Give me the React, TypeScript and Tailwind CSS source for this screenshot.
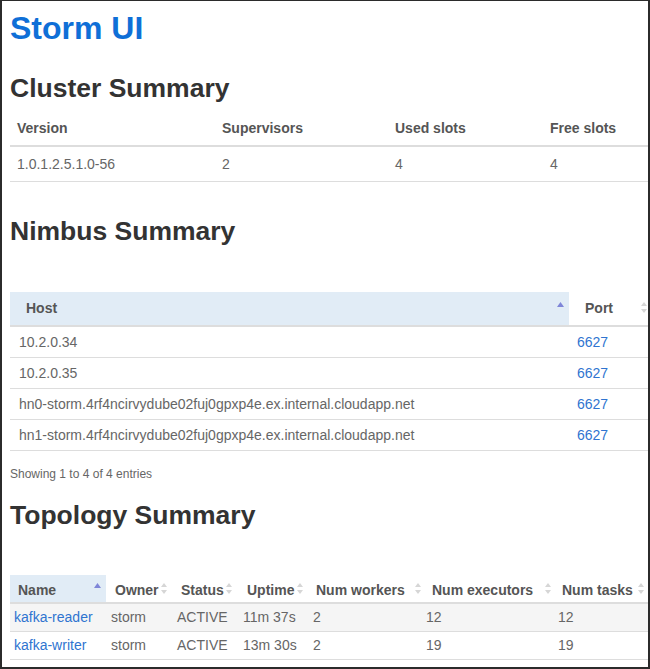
import React from "react";

const UpArrow = () => (
  <svg width="7" height="5" viewBox="0 0 7 5" className="shrink-0">
    <polygon points="0,5 3.5,0 7,5" fill="#7f86d8" />
  </svg>
);

const BothArrow = () => (
  <svg width="6" height="11" viewBox="0 0 6 11" className="shrink-0">
    <polygon points="0,4 3,0 6,4" fill="#d6d6d6" />
    <polygon points="0,7 3,11 6,7" fill="#d6d6d6" />
  </svg>
);

type Col = {
  label: string;
  w: string;
  hpl: string;
  hpr: string;
  bpl: string;
  asc?: boolean;
};

const topoCols: Col[] = [
  { label: "Name", w: "w-[96px]", hpl: "pl-[8px]", hpr: "pr-[5px]", bpl: "pl-[4px]", asc: true },
  { label: "Owner", w: "w-[66px]", hpl: "pl-[9px]", hpr: "pr-[5px]", bpl: "pl-[5px]" },
  { label: "Status", w: "w-[66px]", hpl: "pl-[9px]", hpr: "pr-[6px]", bpl: "pl-[5px]" },
  { label: "Uptime", w: "w-[70px]", hpl: "pl-[9px]", hpr: "pr-[5px]", bpl: "pl-[5px]" },
  { label: "Num workers", w: "w-[114px]", hpl: "pl-[8px]", hpr: "pr-[1px]", bpl: "pl-[5px]" },
  { label: "Num executors", w: "w-[132px]", hpl: "pl-[10px]", hpr: "pr-[3px]", bpl: "pl-[4px]" },
  { label: "Num tasks", w: "w-[100px]", hpl: "pl-[8px]", hpr: "pr-[10px]", bpl: "pl-[4px]" },
];

const topoRows = [
  ["kafka-reader", "storm", "ACTIVE", "11m 37s", "2", "12", "12"],
  ["kafka-writer", "storm", "ACTIVE", "13m 30s", "2", "19", "19"],
];

const hosts = [
  "10.2.0.34",
  "10.2.0.35",
  "hn0-storm.4rf4ncirvydube02fuj0gpxp4e.ex.internal.cloudapp.net",
  "hn1-storm.4rf4ncirvydube02fuj0gpxp4e.ex.internal.cloudapp.net",
];

export default function App() {
  return (
    <div className="w-[650px] h-[669px] bg-white border-[#2b2b2b] border-l-2 border-t border-r-2 border-b-2 overflow-hidden font-['Liberation_Sans',Arial,sans-serif]">
      <div className="pl-[8px] w-[900px]">
        <h1 className="mt-[9px] text-[32px] leading-[36px] font-bold text-[#0f6fd7]">Storm UI</h1>

        <h2 className="mt-[27px] text-[26.5px] leading-[30px] font-bold text-[#333]">Cluster Summary</h2>
        <table className="mt-[8px] table-fixed border-collapse text-[14px] leading-[20px]">
          <thead>
            <tr className="border-b-2 border-[#dddddd]">
              <th className="w-[205px] text-left font-bold text-[#555] pl-[7px] py-[7px]">Version</th>
              <th className="w-[172px] text-left font-bold text-[#555] pl-[7px] py-[7px]">Supervisors</th>
              <th className="w-[155px] text-left font-bold text-[#555] pl-[8px] py-[7px]">Used slots</th>
              <th className="w-[150px] text-left font-bold text-[#555] pl-[8px] py-[7px]">Free slots</th>
            </tr>
          </thead>
          <tbody>
            <tr className="border-b border-[#dddddd]">
              <td className="pl-[7px] py-[7px] text-[#666]">1.0.1.2.5.1.0-56</td>
              <td className="pl-[7px] py-[7px] text-[#666]">2</td>
              <td className="pl-[8px] py-[7px] text-[#666]">4</td>
              <td className="pl-[8px] py-[7px] text-[#666]">4</td>
            </tr>
          </tbody>
        </table>

        <h2 className="mt-[34px] text-[26.5px] leading-[30px] font-bold text-[#333]">Nimbus Summary</h2>
        <table className="mt-[46px] table-fixed border-collapse text-[14px] leading-[20px]">
          <thead>
            <tr className="border-b-2 border-[#dddddd]">
              <th className="w-[559px] bg-[#e1ecf6] text-left font-bold text-[#555] pl-[16px] pr-[5px] pt-[6px] pb-[7px]">
                <div className="flex justify-between items-start">
                  <span>Host</span>
                  <span className="mt-[4px]"><UpArrow /></span>
                </div>
              </th>
              <th className="w-[84px] text-left font-bold text-[#555] pl-[16px] pr-[6px] pt-[6px] pb-[7px]">
                <div className="flex justify-between items-start">
                  <span>Port</span>
                  <span className="mt-[4px]"><BothArrow /></span>
                </div>
              </th>
            </tr>
          </thead>
          <tbody>
            {hosts.map((h) => (
              <tr key={h} className="border-b border-[#dddddd]">
                <td className="pl-[9px] py-[5px] text-[#666]">{h}</td>
                <td className="pl-[8px] py-[5px] text-[#2f74d0]">6627</td>
              </tr>
            ))}
          </tbody>
        </table>
        <div className="mt-[15px] text-[12px] leading-[16px] text-[#666]">Showing 1 to 4 of 4 entries</div>

        <h2 className="mt-[18px] text-[26.5px] leading-[30px] font-bold text-[#333]">Topology Summary</h2>
        <table className="mt-[45px] table-fixed border-collapse text-[14px]">
          <thead>
            <tr className="border-b-2 border-[#dddddd]">
              {topoCols.map((c) => (
                <th
                  key={c.label}
                  className={`${c.w} ${c.hpl} ${c.hpr} ${c.asc ? "bg-[#e1ecf6]" : ""} pt-[5px] pb-[2px] text-left font-bold text-[#555] leading-[20px] whitespace-nowrap`}
                >
                  <div className="flex justify-between items-start">
                    <span>{c.label}</span>
                    <span className="mt-[3px]">{c.asc ? <UpArrow /> : <BothArrow />}</span>
                  </div>
                </th>
              ))}
            </tr>
          </thead>
          <tbody>
            {topoRows.map((r, i) => (
              <tr key={r[0]} className={`border-b border-[#dddddd] ${i === 0 ? "bg-[#f5f5f5]" : "bg-white"}`}>
                {r.map((v, j) => (
                  <td
                    key={j}
                    className={`${topoCols[j].bpl} py-[4px] leading-[19px] whitespace-nowrap ${j === 0 ? "text-[#2f74d0]" : "text-[#666]"}`}
                  >
                    {v}
                  </td>
                ))}
              </tr>
            ))}
          </tbody>
        </table>
      </div>
    </div>
  );
}
